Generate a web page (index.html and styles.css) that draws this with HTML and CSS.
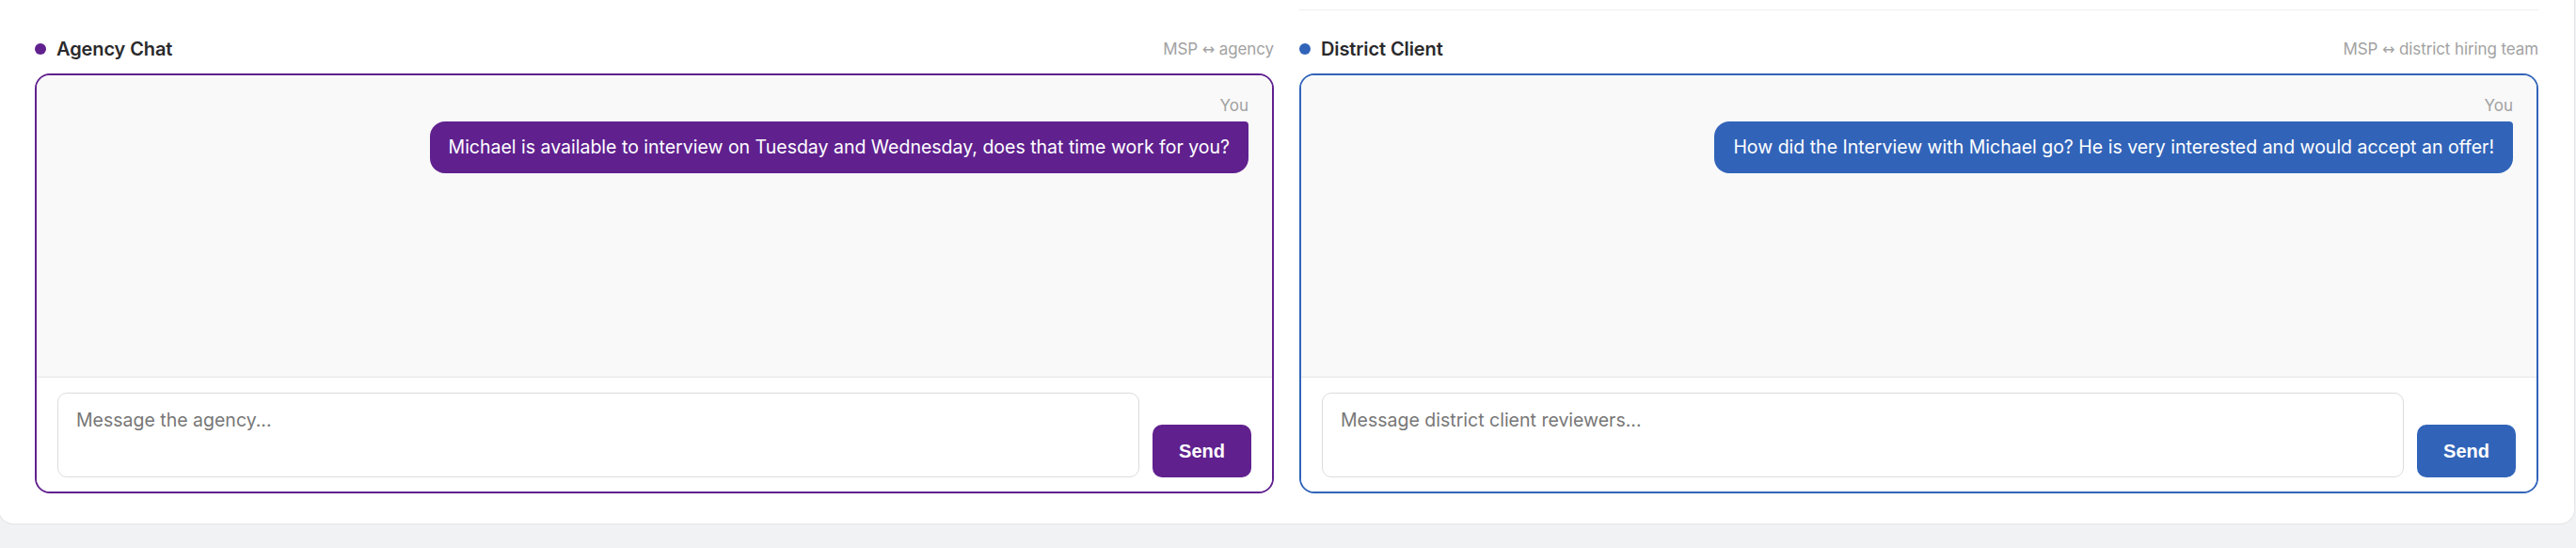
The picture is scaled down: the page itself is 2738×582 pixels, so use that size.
FILE: index.html
```html
<!doctype html>
<html lang="en">
	<head>
		<meta charset="utf-8">
		<title>Conversations</title>
		<link rel="stylesheet" href="styles.css">
	</head>
	<body>
		<div class="card">
			<div class="chat-grid">
				<div class="above"></div>
				<div class="above above-line"></div>

				<section class="chat chat-agency">
					<div class="chat-head">
						<h3 class="chat-title"><span class="dot"></span>Agency Chat</h3>
						<span class="chat-sub">MSP <span class="arrow">&harr;</span> agency</span>
					</div>
					<div class="chat-box">
						<div class="messages">
							<div class="msg msg-own">
								<span class="msg-author">You</span>
								<div class="bubble">Michael is available to interview on Tuesday and Wednesday, does that time work for you?</div>
							</div>
						</div>
						<form class="composer">
							<textarea placeholder="Message the agency..."></textarea>
							<button type="button">Send</button>
						</form>
					</div>
				</section>

				<section class="chat chat-district">
					<div class="chat-head">
						<h3 class="chat-title"><span class="dot"></span>District Client</h3>
						<span class="chat-sub">MSP <span class="arrow">&harr;</span> district hiring team</span>
					</div>
					<div class="chat-box">
						<div class="messages">
							<div class="msg msg-own">
								<span class="msg-author">You</span>
								<div class="bubble">How did the Interview with Michael go? He is very interested and would accept an offer!</div>
							</div>
						</div>
						<form class="composer">
							<textarea placeholder="Message district client reviewers..."></textarea>
							<button type="button">Send</button>
						</form>
					</div>
				</section>
			</div>
		</div>
	</body>
</html>
```

FILE: styles.css
```css
html {
	font-family: Inter, "Noto Sans", sans-serif;
}

body {
	margin: 0;
	background: #f1f2f4;
}

.card {
	margin: 0 1px 0 -2px;
	padding: 0 38px 32px;
	background: #fff;
	border: 1px solid #e4e5e7;
	border-top: none;
	border-radius: 0 0 16px 16px;
}

.chat-grid {
	display: grid;
	grid-template-columns: 1fr 1fr;
	column-gap: 27px;
}

.above {
	height: 10px;
}

.above-line {
	border-bottom: 1px solid #efefef;
}

.chat {
	--accent: #60218f;
	margin-top: 27px;
}

.chat-district {
	--accent: #3164b9;
}

.chat-head {
	display: flex;
	align-items: center;
	justify-content: space-between;
	height: 28px;
	margin-bottom: 12px;
}

.chat-title {
	display: flex;
	align-items: center;
	gap: 11px;
	margin: 0;
	font-size: 20px;
	font-weight: 600;
	color: #2a2a2c;
	letter-spacing: -0.1px;
}

.dot {
	width: 12px;
	height: 12px;
	border-radius: 50%;
	background: var(--accent);
}

.chat-sub {
	font-size: 17px;
	color: #a2a2a2;
	letter-spacing: -0.1px;
}

.arrow {
	font-family: "DejaVu Sans", sans-serif;
	font-size: 16px;
}

.chat-box {
	display: flex;
	flex-direction: column;
	height: 446px;
	box-sizing: border-box;
	border: 2px solid var(--accent);
	border-radius: 16px;
	overflow: hidden;
}

.messages {
	flex: 1;
	padding: 20px 25px;
	background: #f9f9f9;
	border-bottom: 1px solid #e6e6e6;
}

.msg {
	display: flex;
	flex-direction: column;
}

.msg-own {
	align-items: flex-end;
}

.msg-author {
	font-size: 17px;
	line-height: 24px;
	color: #a2a2a2;
	margin-bottom: 5px;
}

.bubble {
	max-width: 80%;
	padding: 14px 20px;
	font-size: 19.5px;
	line-height: 27px;
	color: #fff;
	background: var(--accent);
	border-radius: 16px 4px 16px 16px;
}

.composer {
	display: flex;
	align-items: flex-end;
	gap: 14px;
	margin: 0;
	padding: 16px 22px 15px;
	background: #fff;
}

.composer textarea {
	flex: 1;
	height: 90px;
	box-sizing: border-box;
	padding: 14px 19px;
	font-family: inherit;
	font-size: 19.5px;
	line-height: 28px;
	border: 1px solid #dcdcdc;
	border-radius: 10px;
	resize: none;
}

.composer textarea::placeholder {
	color: #777;
}

.composer button {
	height: 56px;
	padding: 0 28px;
	font-family: "Liberation Sans", Arial, sans-serif;
	font-size: 20px;
	font-weight: 700;
	color: #fff;
	background: var(--accent);
	border: none;
	border-radius: 10px;
	cursor: pointer;
}
```
